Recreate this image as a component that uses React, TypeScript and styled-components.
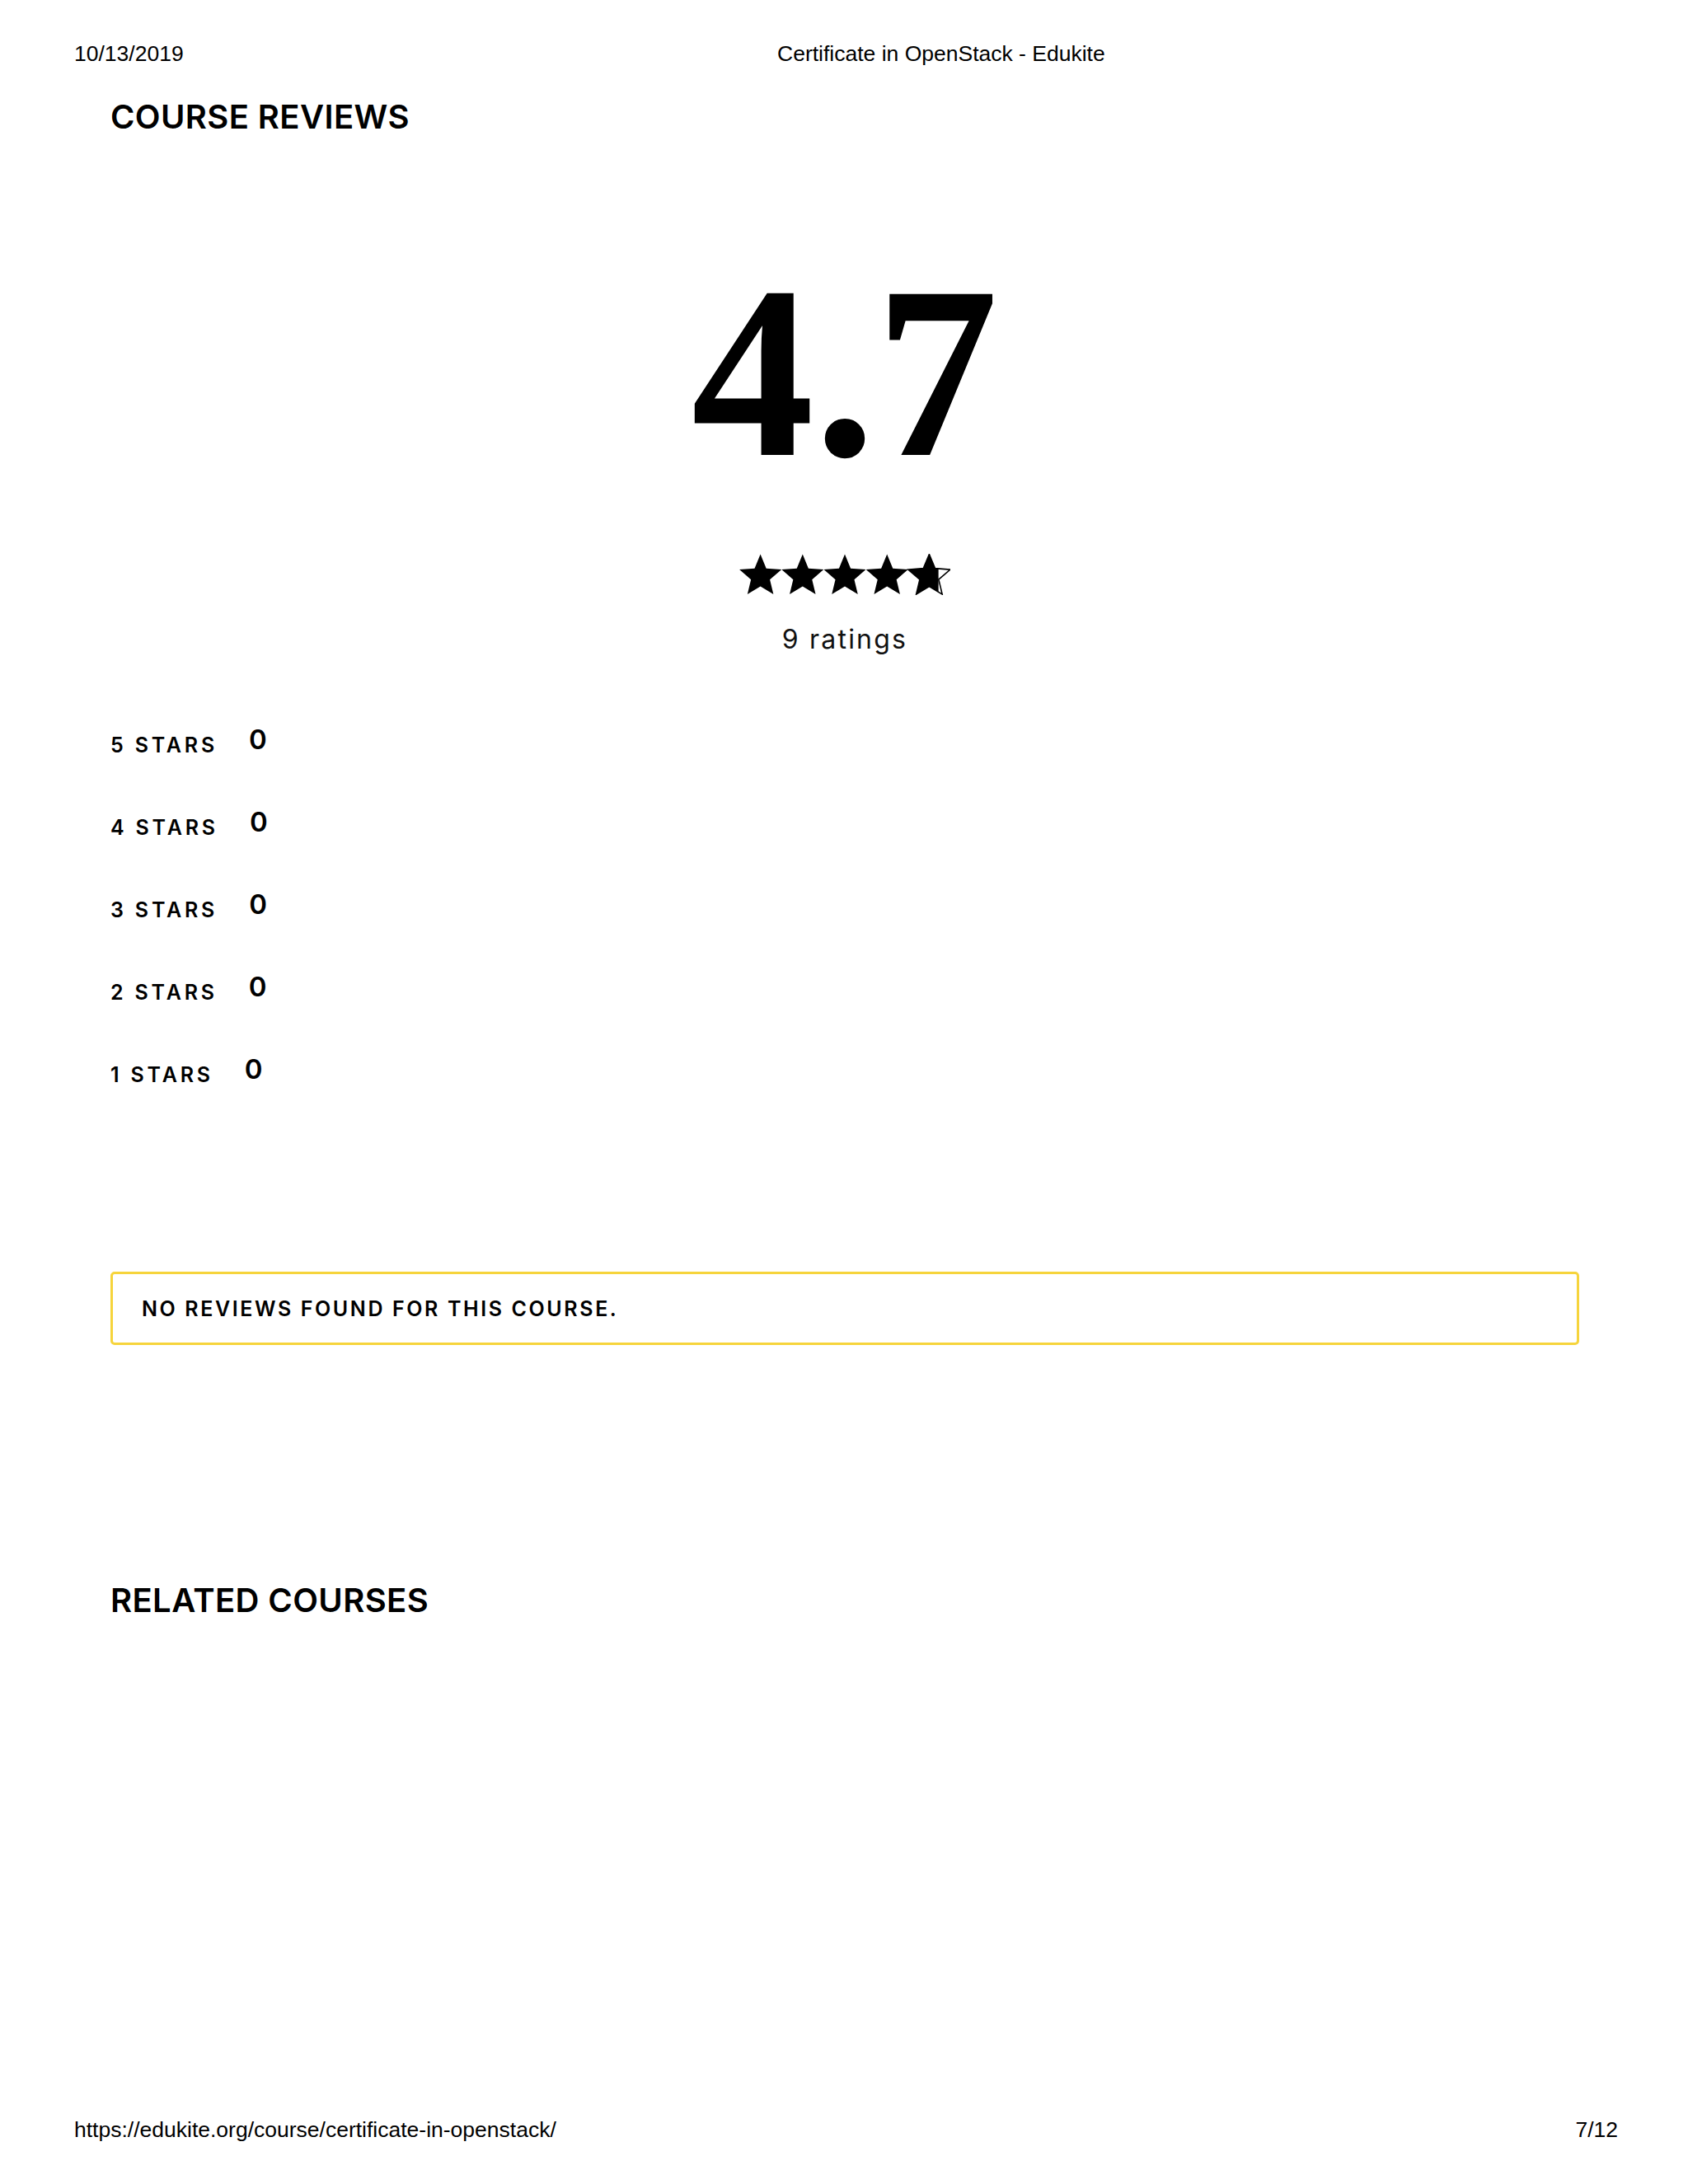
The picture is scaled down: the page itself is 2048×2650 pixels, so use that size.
import React from "react";
import styled, { createGlobalStyle } from "styled-components";

const GlobalStyle = createGlobalStyle`
  html, body {
    margin: 0;
    padding: 0;
    background: #ffffff;
  }
  body {
    font-family: "Inter", "Liberation Sans", sans-serif;
    color: #000000;
  }
`;

const Page = styled.div`
  width: 2048px;
  min-height: 2650px;
  display: flex;
  flex-direction: column;
  box-sizing: border-box;
  padding-bottom: 50px;
`;

const PrintBar = styled.div<{ $top?: number }>`
  display: flex;
  align-items: baseline;
  justify-content: space-between;
  padding: ${(p) => p.$top ?? 0}px 85px 0 90px;
  font-family: "Liberation Sans", Arial, sans-serif;
  font-size: 26.5px;
  line-height: 32px;
  color: #000;
`;

const HeaderGrid = styled(PrintBar)`
  display: grid;
  grid-template-columns: 853px auto;
  justify-content: start;
`;

const FooterBar = styled(PrintBar)`
  margin-top: auto;
`;

const Main = styled.main`
  display: flex;
  flex-direction: column;
  padding: 0 132px 0 134px;
`;

const SectionTitle = styled.h2<{ $mt: number }>`
  margin: ${(p) => p.$mt}px 0 0;
  font-family: "Inter", sans-serif;
  font-weight: 600;
  font-size: 40px;
  line-height: 48px;
  letter-spacing: 0.4px;
  text-transform: uppercase;
  color: #000;
`;

const Summary = styled.section`
  display: flex;
  flex-direction: column;
  align-items: center;
`;

const BigScore = styled.div`
  margin-top: 136px;
  font-family: "Liberation Serif", "Times New Roman", serif;
  font-weight: 700;
  font-size: 298px;
  line-height: 298px;
  color: #000;
`;

const StarsSvg = styled.svg`
  display: block;
  margin-top: 72px;
`;

const RatingsCount = styled.div`
  margin-top: 34px;
  font-family: "Inter", sans-serif;
  font-weight: 400;
  font-size: 32px;
  line-height: 40px;
  letter-spacing: 2.2px;
  color: #111;
`;

const Breakdown = styled.ul`
  list-style: none;
  margin: 85px 0 0;
  padding: 0;
  display: flex;
  flex-direction: column;
`;

const BreakdownRow = styled.li`
  display: flex;
  align-items: flex-start;
  gap: 38px;
  height: 100px;
`;

const StarLabel = styled.span`
  font-family: "Inter", sans-serif;
  font-weight: 600;
  font-size: 25px;
  line-height: 47px;
  letter-spacing: 3.8px;
  text-transform: uppercase;
  color: #000;
`;

const StarCount = styled.span`
  font-family: "Inter", sans-serif;
  font-weight: 600;
  font-size: 33px;
  line-height: 33px;
  color: #000;
`;

const Notice = styled.div`
  margin-top: 162px;
  height: 89px;
  box-sizing: border-box;
  display: flex;
  align-items: center;
  padding: 0 35px;
  border: 3px solid #f6d43c;
  border-radius: 5px;
  font-family: "Inter", sans-serif;
  font-weight: 600;
  font-size: 25px;
  line-height: 30px;
  letter-spacing: 2.6px;
  text-transform: uppercase;
  color: #000;
`;

const STAR_W = 51.2;
const STAR_R = 26.8;
const INNER = 0.45;

function starPoints(cx: number, cy: number, R: number, r: number): string {
  const pts: string[] = [];
  for (let k = 0; k < 10; k++) {
    const a = ((-90 + 36 * k) * Math.PI) / 180;
    const rad = k % 2 === 0 ? R : r;
    pts.push(`${(cx + rad * Math.cos(a)).toFixed(2)},${(cy + rad * Math.sin(a)).toFixed(2)}`);
  }
  return pts.join(" ");
}

function Stars({ rating }: { rating: number }) {
  const width = STAR_W * 5;
  const height = 50;
  const cy = STAR_R + 0.6;
  const halfW = STAR_R * Math.sin((72 * Math.PI) / 180);
  return (
    <StarsSvg width={width} height={height} viewBox={`0 0 ${width} ${height}`} aria-label={`${rating} out of 5`}>
      <defs>
        {[0, 1, 2, 3, 4].map((i) => {
          const cx = STAR_W * (i + 0.5);
          const frac = Math.max(0, Math.min(1, rating - i));
          const fillFrac = frac >= 1 ? 1 : frac > 0 ? frac + 0.02 : 0;
          return (
            <clipPath id={`star-clip-${i}`} key={i}>
              <rect x={cx - halfW} y={0} width={2 * halfW * fillFrac} height={height} />
            </clipPath>
          );
        })}
      </defs>
      {[0, 1, 2, 3, 4].map((i) => {
        const cx = STAR_W * (i + 0.5);
        const pts = starPoints(cx, cy, STAR_R, STAR_R * INNER);
        const frac = rating - i;
        return (
          <g key={i}>
            {frac < 1 && (
              <polygon points={pts} fill="none" stroke="#000" strokeWidth={1.6} strokeLinejoin="miter" />
            )}
            <polygon points={pts} fill="#000" clipPath={`url(#star-clip-${i})`} />
          </g>
        );
      })}
    </StarsSvg>
  );
}

const breakdown = [
  { stars: 5, count: 0 },
  { stars: 4, count: 0 },
  { stars: 3, count: 0 },
  { stars: 2, count: 0 },
  { stars: 1, count: 0 },
];

export default function App() {
  return (
    <>
      <GlobalStyle />
      <Page>
        <HeaderGrid $top={49}>
          <span>10/13/2019</span>
          <span>Certificate in OpenStack - Edukite</span>
        </HeaderGrid>
        <Main>
          <SectionTitle $mt={37}>Course Reviews</SectionTitle>
          <Summary>
            <BigScore>4.7</BigScore>
            <Stars rating={4.7} />
            <RatingsCount>9 ratings</RatingsCount>
          </Summary>
          <Breakdown>
            {breakdown.map((b) => (
              <BreakdownRow key={b.stars}>
                <StarLabel>{b.stars} Stars</StarLabel>
                <StarCount>{b.count}</StarCount>
              </BreakdownRow>
            ))}
          </Breakdown>
          <Notice>No reviews found for this course.</Notice>
          <SectionTitle $mt={286}>Related Courses</SectionTitle>
        </Main>
        <FooterBar>
          <span>https://edukite.org/course/certificate-in-openstack/</span>
          <span>7/12</span>
        </FooterBar>
      </Page>
    </>
  );
}
